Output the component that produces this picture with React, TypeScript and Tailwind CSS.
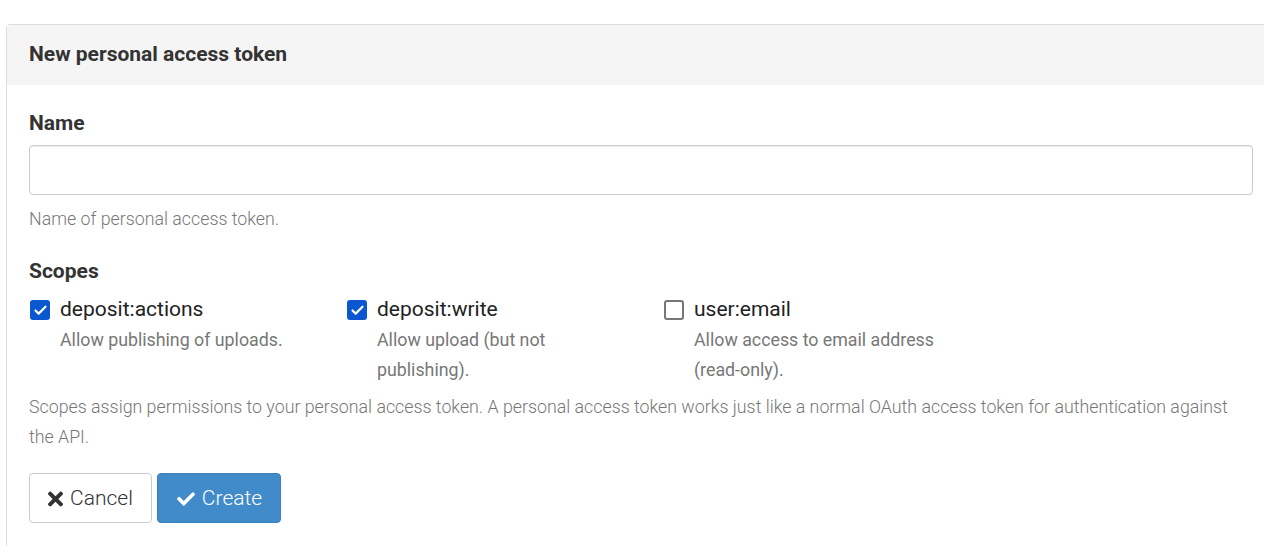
import { Check } from 'lucide-react';
import { FaCheck, FaTimes } from 'react-icons/fa';

const scopes = [
  { name: 'deposit:actions', desc: 'Allow publishing of uploads.', checked: true },
  { name: 'deposit:write', desc: 'Allow upload (but not publishing).', checked: true },
  { name: 'user:email', desc: 'Allow access to email address (read-only).', checked: false },
];

function Box({ checked }: { checked: boolean }) {
  if (checked) {
    return (
      <span className="flex h-[20px] w-[20px] shrink-0 items-center justify-center rounded-[3px] bg-[#0b57d0]">
        <Check className="h-[15px] w-[15px] text-white" strokeWidth={3.5} />
      </span>
    );
  }
  return <span className="h-[20px] w-[20px] shrink-0 rounded-[3px] border-2 border-[#767676] bg-white" />;
}

export default function App() {
  return (
    <div className="h-[546px] w-[1264px] overflow-hidden bg-white pt-[24px] pl-[6px] font-['Roboto',sans-serif] text-[#333]">
      <div className="w-[1270px] rounded-tl-[4px] border border-[#ddd]">
        {/* Heading */}
        <div className="flex h-[60px] items-center bg-[#f5f5f5] px-[22px]">
          <h3 className="text-[21px] font-bold text-[#333]">New personal access token</h3>
        </div>

        <div className="px-[22px] pt-[23px] pb-[40px]">
          {/* Name */}
          <label className="block text-[21px] leading-[30px] font-bold">Name</label>
          <input
            type="text"
            className="mt-[7px] block h-[50px] w-full rounded-[4px] border border-[#ccc] px-3 text-[18px] shadow-[inset_0_1px_1px_rgba(0,0,0,0.075)] outline-none"
          />
          <p className="mt-[9px] text-[17.8px] leading-[30px] font-light text-[#777]">Name of personal access token.</p>

          {/* Scopes */}
          <label className="mt-[22px] block text-[21px] leading-[30px] font-bold">Scopes</label>
          <div className="mt-[9px] flex">
            {scopes.map((s) => (
              <div key={s.name} className="w-[317px] pl-px">
                <div className="flex h-[30px] items-center gap-[10px]">
                  <Box checked={s.checked} />
                  <span className="text-[21px] text-[#222]">{s.name}</span>
                </div>
                <p className="max-w-[280px] pl-[30px] text-[17.8px] leading-[30px] text-[#777]">{s.desc}</p>
              </div>
            ))}
          </div>
          <p className="mt-[7px] text-[17.8px] leading-[30px] font-light text-[#777]">
            Scopes assign permissions to your personal access token. A personal access token works just like a normal OAuth access token for authentication against the API.
          </p>

          {/* Actions */}
          <div className="mt-[21px] flex gap-[5px]">
            <button className="flex h-[50px] w-[123px] items-center justify-center gap-[7px] rounded-[4px] border border-[#ccc] bg-white pt-[2px] text-[21px] font-light text-[#333]">
              <FaTimes className="h-[22px] w-[15px]" />
              Cancel
            </button>
            <button className="flex h-[50px] w-[124px] items-center justify-center gap-[6px] rounded-[4px] border border-[#3a80bd] bg-[#428bca] pt-[2px] text-[21px] font-light text-white">
              <FaCheck className="h-[18px] w-[20px]" />
              Create
            </button>
          </div>
        </div>
      </div>
    </div>
  );
}
